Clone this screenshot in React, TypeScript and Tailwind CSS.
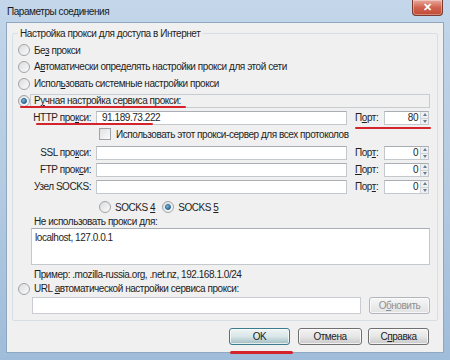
import React from "react";

const font = { fontFamily: '"Liberation Sans", Arial, sans-serif' };

function Radio({ checked = false }: { checked?: boolean }) {
  return (
    <span className="w-[12px] h-[12px] shrink-0 rounded-full border border-[#a0a4a8] bg-gradient-to-br from-[#dcdcdc] to-[#fbfbfb] flex items-center justify-center">
      {checked && (
        <span className="w-[6px] h-[6px] rounded-full bg-gradient-to-br from-[#9fd3f0] to-[#1b5f95] border border-[#1d5f8e]" />
      )}
    </span>
  );
}

function Check() {
  return (
    <span className="w-[12px] h-[12px] shrink-0 border border-[#a0a4a8] bg-gradient-to-br from-[#dedede] to-[#fbfbfb] flex items-center justify-center">
      <span className="w-[8px] h-[8px] bg-gradient-to-br from-[#e4e4e4] to-[#f8f8f8]" />
    </span>
  );
}

function Spin() {
  return (
    <span className="w-[8px] h-full flex flex-col border-l border-[#d0d4d8]">
      <span className="flex-1 flex items-center justify-center border-b border-[#d0d4d8] bg-[#eef0f2]">
        <span className="w-0 h-0 border-l-[2px] border-r-[2px] border-b-[3px] border-l-transparent border-r-transparent border-b-[#6b7c8d]" />
      </span>
      <span className="flex-1 flex items-center justify-center bg-[#eef0f2]">
        <span className="w-0 h-0 border-l-[2px] border-r-[2px] border-t-[3px] border-l-transparent border-r-transparent border-t-[#6b7c8d]" />
      </span>
    </span>
  );
}

function Field({ label, value, port, top }: { label: React.ReactNode; value?: string; port: React.ReactNode; top: string }) {
  return (
    <div className={`flex items-center h-[14px] ${top}`}>
      <div className="w-[79px] text-right pr-[1px] leading-none"><span>{label}</span></div>
      <div className="ml-[4px] w-[251px] h-full bg-white border border-[#c3c8cd] border-t-[#a9aeb4] flex items-center pl-[5px] leading-none">
        <span>{value}</span>
      </div>
      <div className="ml-[8px] w-[29px] leading-none"><span>{port}</span></div>
      <div className="w-[45px] h-full bg-white border border-[#c3c8cd] border-t-[#a9aeb4] flex items-center">
        <span className="flex-1 text-right pr-[2px] leading-none">{value ? "80" : "0"}</span>
        <Spin />
      </div>
    </div>
  );
}

function Btn({ children, w, primary = false, disabled = false }: { children: React.ReactNode; w: string; primary?: boolean; disabled?: boolean }) {
  const base = primary
    ? "border-[#3d7b8f] bg-gradient-to-b from-[#eef4f5] via-[#d9e6e8] to-[#9fbcc1]"
    : disabled
      ? "border-[#b2b6ba] bg-gradient-to-b from-[#f6f6f6] to-[#e2e2e2] text-[#8d9094]"
      : "border-[#707070] bg-gradient-to-b from-[#f3f3f3] via-[#e6e6e6] to-[#c9c9c9]";
  return (
    <div className={`${w} h-full rounded-[3px] border flex items-center justify-center leading-none shadow-[inset_0_0_0_1px_rgba(255,255,255,0.7)] ${base}`}>
      <span>{children}</span>
    </div>
  );
}

export default function App() {
  return (
    <div style={font} className="relative w-[450px] h-[360px] flex flex-col text-[10px] tracking-[-0.45px] text-[#1e1e1e] bg-gradient-to-b from-[#c3d6ea] via-[#b4cbe2] to-[#9fbcda] overflow-hidden">
      {/* title bar */}
      <div className="h-[22px] flex items-start shrink-0">
        <div className="pl-[7px] pt-[4px] text-[10px] text-[#1a1a1a]">Параметры соединения</div>
        <div className="ml-auto mr-[7px] w-[31px] h-[16px] rounded-b-[4px] border border-t-0 border-[#7a3a30] bg-gradient-to-b from-[#e8a99c] via-[#d0624f] to-[#c04a33] flex items-center justify-center text-white font-bold text-[11px] leading-none shadow-[inset_0_0_0_1px_rgba(255,255,255,0.35)]">
          ✕
        </div>
      </div>

      {/* dialog body */}
      <div className="mx-[6px] mb-[7px] flex-1 bg-[#f0f0f0] border border-[#8fa7c0] flex flex-col px-[5px] pt-[10px]">
        <div className="relative border border-[#d5dfe5] rounded-[2px] flex flex-col pt-[8px] pb-[6px]">
          <div className="absolute left-[5px] -top-[7px] px-[2px] bg-[#f0f0f0] leading-[14px]">
            Настройка прокси для доступа в Интернет
          </div>

          <div className="h-[16px] flex items-center pl-[5px] gap-[4px]"><Radio /><span>Бе<u>з</u> прокси</span></div>
          <div className="h-[17px] flex items-center pl-[5px] gap-[4px]"><Radio /><span>А<u>в</u>томатически определять настройки прокси для этой сети</span></div>
          <div className="h-[17px] flex items-center pl-[5px] gap-[4px]"><Radio /><span>Испол<u>ь</u>зовать системные настройки прокси</span></div>

          <div className="mt-[2px] h-[14px] flex items-center pl-[5px]">
            <Radio checked />
            <div className="mr-[7px] flex-1 h-full border border-[#c7ccd1] flex items-center pl-[3px] leading-none">
              <span>Р<u>у</u>чная настройка сервиса прокси:</span>
            </div>
          </div>

          <Field top="mt-[3px]" label={<>HTTP про<u>к</u>си:</>} value="91.189.73.222" port={<>П<u>о</u>рт:</>} />

          <div className="mt-[1px] h-[16px] flex items-center pl-[86px] gap-[5px]">
            <Check />
            <span>Использовать этот прокси-сервер для всех протоколов</span>
          </div>

          <Field top="mt-[4px]" label={<>SSL про<u>к</u>си:</>} port={<>Пор<u>т</u>:</>} />
          <Field top="mt-[3px]" label={<>FTP прок<u>с</u>и:</>} port={<><u>П</u>орт:</>} />
          <Field top="mt-[3px]" label={<>Узел SOCKS:</>} port={<>Пор<u>т</u>:</>} />

          <div className="mt-[5px] h-[16px] flex items-center pl-[86px]">
            <Radio />
            <span className="ml-[4px]">SOCKS <u>4</u></span>
            <span className="ml-[7px]"><Radio checked /></span>
            <span className="ml-[4px]">SOCKS <u>5</u></span>
          </div>

          <div className="h-[13px] flex items-center pl-[21px] leading-none"><span>Не использовать прокси <u>д</u>ля:</span></div>
          <div className="ml-[18px] mr-[7px] h-[37px] bg-white border border-[#c3c8cd] border-t-[#a9aeb4] pl-[3px] pt-[2px] leading-[14px]">
            localhost, 127.0.0.1
          </div>

          <div className="mt-[3px] h-[14px] flex items-center pl-[21px] leading-none"><span>Пример: .mozilla-russia.org, .net.nz, 192.168.1.0/24</span></div>

          <div className="h-[14px] flex items-center pl-[5px] gap-[4px] leading-none">
            <Radio />
            <span>URL <u>а</u>втоматической настройки сервиса прокси:</span>
          </div>

          <div className="mt-[1px] h-[17px] flex items-center pl-[19px] pr-[7px]">
            <div className="flex-1 h-full bg-white border border-[#c9cdd2]" />
            <div className="ml-[8px] h-full">
              <Btn w="w-[61px]" disabled>О<u>б</u>новить</Btn>
            </div>
          </div>
        </div>

        <div className="mt-[7px] h-[17px] flex justify-end pr-[9px]">
          <Btn w="w-[61px]" primary>OK</Btn>
          <div className="w-[8px]" />
          <Btn w="w-[64px]">Отмена</Btn>
          <div className="w-[6px]" />
          <Btn w="w-[61px]">С<u>п</u>равка</Btn>
        </div>
      </div>

      {/* red annotation marks */}
      <div className="absolute left-[20px] top-[106px] w-[166px] h-[2px] bg-[#d4232a] rounded-full" />
      <div className="absolute left-[36px] top-[123px] w-[117px] h-[2px] bg-[#d4232a] rounded-full" />
      <div className="absolute left-[355px] top-[127px] w-[76px] h-[2px] bg-[#d4232a] rounded-full" />
      <div className="absolute left-[230px] top-[351px] w-[63px] h-[3px] bg-[#d4232a] rounded-full" />
    </div>
  );
}
